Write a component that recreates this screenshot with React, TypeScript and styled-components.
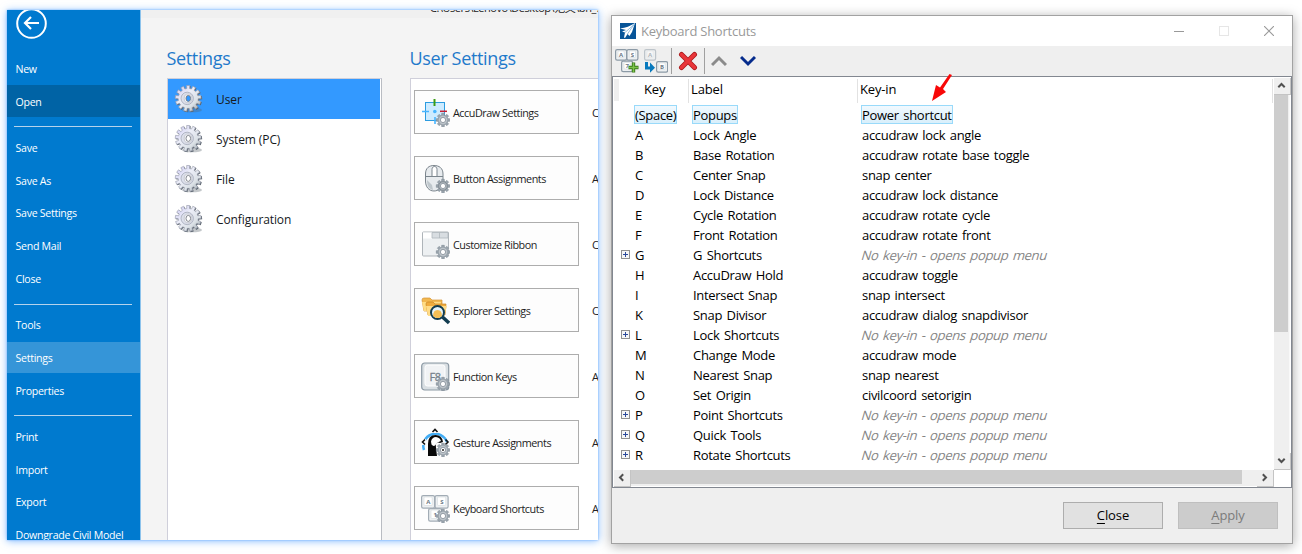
import React from "react";
import styled, { createGlobalStyle } from "styled-components";

const Global = createGlobalStyle`
  * { box-sizing: border-box; }
  html, body { margin: 0; background: #fff; overflow: hidden; }
  body { font-family: "Open Sans", "Noto Sans", "Noto Sans CJK SC", sans-serif; font-size: 12px; color: #222; }
  svg { display: block; flex: none; }
`;

const Page = styled.main`
  width: 1302px; height: 554px; padding: 10px 0 0 7px;
  display: flex; align-items: flex-start; gap: 13px; overflow: hidden; background: #fff;
`;

/* ---------- backstage window ---------- */
const Backstage = styled.section`
  width: 591px; height: 530px; display: flex; flex: none;
  box-shadow: 0 0 2px #6cb0ff, 0 1px 8px rgba(70, 150, 255, .65);
`;
const Sidebar = styled.nav`
  width: 134px; height: 530px; flex: none; overflow: hidden;
  background: #007acf; border-right: 1px solid #8dc3ec; color: #fff;
`;
const BackBox = styled.div`
  height: 42.6px; padding-left: 9px; overflow: hidden;
  svg { margin-top: -3px; }
`;
const NavItem = styled.div<{ $bg?: string }>`
  height: 31.9px; margin-bottom: 1px; padding: 1px 0 0 8.5px;
  display: flex; align-items: center; white-space: nowrap;
  font-size: 10.6px; letter-spacing: -.28px; color: #fff; background: ${p => p.$bg || "transparent"};
`;
const NavRule = styled.div`
  height: 12.9px; padding: 8px 8px 0 7px;
  &::before { content: ""; display: block; height: 1px; background: #b5d3ec; }
`;
const Content = styled.div`
  flex: 1; min-width: 0; height: 530px; overflow: hidden; background: #f4f4f4;
`;
const PathStrip = styled.div`
  height: 8px; padding-left: 289px; overflow: hidden; background: #f0f0f0;
  white-space: nowrap; color: #222;
  span { display: block; margin-top: -10px; line-height: 16px; font-size: 11px; letter-spacing: -.45px; }
`;
const Columns = styled.div`display: flex; height: 522px;`;
const Column = styled.div<{ $left: number; $width: number }>`
  flex: none; margin-left: ${p => p.$left}px; width: ${p => p.$width}px;
  display: flex; flex-direction: column;
`;
const Heading = styled.h2`
  margin: 0; height: 60px; padding-top: 27px; line-height: 26px; text-indent: -.6px;
  font-size: 18px; font-weight: 400; letter-spacing: -.33px; color: #1f7acb; white-space: nowrap;
`;
const CategoryList = styled.div`
  flex: 1; background: #fff; border: 1px solid #cfcfda; border-bottom: 0;
  border-right: 1px solid #b9bcc2; padding-right: 1px; margin-right: 1px;
`;
const Category = styled.div<{ $selected?: boolean }>`
  height: 40px; padding-left: 6px; display: flex; align-items: center; gap: 12px;
  font-size: 12px; letter-spacing: -.1px; color: #16191c; background: ${p => (p.$selected ? "#3399ff" : "#fff")};
`;
const ToolList = styled.div`
  flex: 1; background: #fff; border: 1px solid #cfcfda; border-width: 1px 0 0 1px;
  padding: 11px 0 0 3px; display: flex; flex-direction: column; gap: 22px; overflow: hidden;
`;
const ToolRow = styled.div`display: flex; align-items: center; gap: 13px; height: 44px; flex: none; font-size: 11px; color: #222;`;
const ToolButton = styled.button`
  width: 165px; height: 44px; flex: none; padding: 0 0 0 6px; display: flex; align-items: center; gap: 3px;
  border: 1px solid #adadad; background: #fdfdfd; font: inherit; font-size: 10.8px; letter-spacing: -.46px; color: #1c1c1c; white-space: nowrap;
`;

/* ---------- keyboard shortcuts dialog ---------- */
const Dialog = styled.section`
  width: 682px; height: 529px; flex: none; margin-top: 5px; display: flex; flex-direction: column;
  background: #efefef; border: 1px solid #a2a2a2; box-shadow: 0 2px 11px rgba(0, 0, 0, .34);
`;
const TitleBar = styled.header`
  height: 30px; flex: none; padding: 0 18px 0 8px; display: flex; align-items: center; background: #fff;
`;
const Title = styled.span`flex: 1; margin-left: 5px; font-size: 13px; letter-spacing: -.24px; color: #999;`;
const Caption = styled.div`display: flex; gap: 35px;`;
const Toolbar = styled.div`height: 30px; flex: none; display: flex; align-items: center; padding-left: 3px;`;
const Divider = styled.i`width: 1px; height: 26px; margin: 0 6px; background: #a0a0a0;`;
const Tool = styled.div<{ $w: number; $mr?: number }>`width: ${p => p.$w}px; margin-right: ${p => p.$mr || 0}px;`;
const Grid = styled.div`
  height: 412px; flex: none; border: 1px solid #828790; padding: 1px; background: #fff;
  display: grid; grid-template: 392px 17px / 660px 1fr;
`;
const Table = styled.div`overflow: hidden; font-size: 13px; color: #000;`;
const HeadRow = styled.div`height: 26px; display: flex; padding-top: 1px; line-height: 20px;`;
const HeadStub = styled.div`width: 5px; height: 22px; background: #efefef;`;
const HeadCell = styled.div<{ $w: number; $pad: number }>`
  width: ${p => p.$w}px; height: 24px; padding-left: ${p => p.$pad}px; border-right: 1px solid #e2e2e2; letter-spacing: -.15px;
`;
const Row = styled.div`height: 20px; display: flex; align-items: center; padding-left: 7px;`;
const Toggle = styled.div`width: 13px; height: 9px;`;
const Cell = styled.div<{ $w: number }>`width: ${p => p.$w}px; white-space: nowrap;`;
const CellText = styled.span<{ $active?: boolean; $muted?: boolean }>`
  display: inline-block; height: 19px; line-height: 18px; letter-spacing: -.3px; word-spacing: 1.4px;
  border: 1px solid ${p => (p.$active ? "#99dafa" : "transparent")};
  background: ${p => (p.$active ? "linear-gradient(#f1f9fe, #d9effb)" : "none")};
  color: ${p => (p.$muted ? "#858585" : "#000")};
  transform: ${p => (p.$muted ? "skewX(-16deg)" : "none")};
`;
const VScroll = styled.div`display: flex; flex-direction: column; width: 16px; background: #efefef; border-right: 1px solid #f8f8f8;`;
const HScroll = styled.div`display: flex; height: 16px; background: #efefef;`;
const ScrollButton = styled.div`
  width: 17px; height: 17px; flex: none; display: grid; place-items: center; padding: 0 2px 2px 0;
  border: 1px solid #c4c4c4; border-width: 0 1px 1px 0; background: #efefef;
`;
const VThumb = styled.div`width: 14px; height: 237px; background: #cdcdcd;`;
const HThumb = styled.div`width: 611px; height: 14px; background: #cdcdcd;`;
const Spacer = styled.div`flex: 1;`;
const Footer = styled.footer`flex: 1; display: flex; justify-content: flex-end; gap: 15px; padding: 14px 14px 0 0;`;
const DialogButton = styled.button`
  width: 100px; height: 27px; padding: 0 0 1px; border: 1px solid #adadad; background: #e1e1e1;
  font: inherit; font-size: 13px; letter-spacing: -.1px; color: #000;
  &:disabled { background: #ccc; border-color: #bfbfbf; color: #7b7b7b; }
  u { text-underline-offset: 3px; }
`;
const Pointer = styled.div`position: absolute; left: 930px; top: 72px;`;

/* ---------- drawings ---------- */
function gearPath(cx: number, cy: number, r: number, depth: number, teeth: number) {
  const pts: string[] = [];
  const step = (Math.PI * 2) / teeth;
  for (let i = 0; i < teeth; i++) {
    const a = i * step - Math.PI / 2;
    [[-0.3, r - depth], [-0.25, r], [0.25, r], [0.3, r - depth]].forEach(([o, q]) => {
      pts.push(`${(cx + Math.cos(a + o * step) * q).toFixed(2)} ${(cy + Math.sin(a + o * step) * q).toFixed(2)}`);
    });
  }
  return `M${pts.join("L")}Z`;
}
const BigGear = ({ hole }: { hole: string }) => (
  <svg width="30" height="30" viewBox="0 0 30 30">
    <defs>
      <linearGradient id="steel" x1="0" y1="0" x2="1" y2="1">
        <stop offset="0" stopColor="#c9c6f2" /><stop offset=".4" stopColor="#eceef8" /><stop offset=".7" stopColor="#dbe1e6" /><stop offset="1" stopColor="#8b969e" />
      </linearGradient>
    </defs>
    <ellipse cx="18" cy="26" rx="10" ry="2.3" fill="#56606a" opacity=".35" />
    <path d={gearPath(15, 15.2, 13.2, 3, 13)} fill="#59636e" strokeLinejoin="round" />
    <path d={gearPath(14.2, 14.4, 13, 3, 13)} fill="url(#steel)" stroke="#9599a8" strokeWidth=".6" strokeLinejoin="round" />
    <circle cx="13.2" cy="14.4" r="6.2" fill="#dcdfeb" stroke="#a5a9b8" strokeWidth=".8" />
    <ellipse cx="14" cy="14.4" rx="3.8" ry="4.4" fill="#f4f5f8" stroke="#b0b4bc" strokeWidth=".6" />
    <ellipse cx="14.3" cy="14.4" rx="2.3" ry="3" fill={hole} stroke="#777c84" strokeWidth=".9" />
  </svg>
);
const SmallGear = () => (
  <g>
    <path d={gearPath(22, 22, 6.8, 1.7, 8)} fill="#9ba5ae" stroke="#7e8993" strokeWidth=".6" />
    <circle cx="22" cy="22" r="4.2" fill="#bdc4ca" />
    <circle cx="22" cy="22" r="2.6" fill="#fff" stroke="#818c96" strokeWidth=".8" />
  </g>
);
const Key = ({ x, y, s, label, c = "#8c9aa6" }: { x: number; y: number; s: number; label: string; c?: string }) => (
  <g>
    <rect x={x + .6} y={y + .6} width={s} height={s - .5} rx="1.6" fill="#edf0f2" stroke={c} strokeWidth="1.2" />
    <rect x={x + 3} y={y + 2} width={s - 4.8} height={s - 4.5} rx="1" fill="#fff" stroke="#d3dade" strokeWidth=".6" />
    <text x={x + s / 2 + .6} y={y + s / 2 + 2.2} fontSize="6" fontWeight="700" textAnchor="middle" fill="#6c7985">{label}</text>
  </g>
);
const icons: Record<string, React.ReactNode> = {
  accudraw: <g fill="none">
    <rect x="4.5" y="4.5" width="19" height="18" fill="#cdebff" stroke="#2c9ce0" />
    <path d="M1 13.5h7M14 19v7" stroke="#48b5ff" strokeWidth="1.6" /><circle cx="13.8" cy="13.5" r="1.8" fill="#48b5ff" />
    <path d="M13.5 1v7" stroke="#3c9d14" strokeWidth="2" /><path d="M19 13.3h7" stroke="#c51f33" strokeWidth="1.5" />
    <SmallGear />
  </g>,
  mouse: <g fill="#e7ebee" stroke="#7b858d" strokeWidth="1">
    <path d="M4.5 10C4.500 4 8 1.500 13 1.500S22 4 22 10v7c0 6-4 10-9 10s-8.500-4-8.500-10z" />
    <path d="M4.500 12.500h17.500M11 12V5.500c0-4 5-4 5 0V12" fill="#fff" /><path d="M6 16c0 6 2 9 6 10l-1-5" fill="#bfc7cc" stroke="none" />
    <SmallGear />
  </g>,
  ribbon: <g>
    <rect x="1.500" y="2" width="26" height="24" rx="1" fill="#edf0f2" stroke="#aeb4b9" />
    <rect x="2" y="2.500" width="9" height="6" fill="#fff" /><path d="M11 2.500h16v5.500H11zM18.500 2.500V8" fill="#d8dde1" stroke="#b0b7bd" strokeWidth=".8" />
    <SmallGear />
  </g>,
  explorer: <g>
    <path d="M1 4q0-2 2-2h6l2 2h10v11H3z" fill="#f2b850" stroke="#d69335" strokeWidth=".7" />
    <path d="M1 6h19l-2 9H3z" fill="#ffdd86" />
    <path d="M5 8q0-2 2-2h5l2 2h11l-1 11H7z" fill="#f0ac3e" stroke="#c98524" strokeWidth=".7" />
    <path d="M5 10h21l-3 10H7z" fill="#ffdc88" />
    <circle cx="16.500" cy="16.500" r="6.500" fill="#e5f4fc" stroke="#123c50" strokeWidth="2" />
    <path d="M12 20q0-6 4.500-6t4.500 6l-3 2h-3z" fill="#f4bf55" />
    <path d="m21.500 21 6.500 6" stroke="#123c50" strokeWidth="3.400" />
  </g>,
  fkey: <g>
    <rect x=".7" y="1" width="27" height="27" rx="3" fill="#d9dfe3" stroke="#8c99a4" strokeWidth="1.200" />
    <rect x="4" y="3" width="20" height="21" rx="2.500" fill="#f1f3f5" stroke="#fff" />
    <text x="8.500" y="18.500" fontSize="11" fill="#75818c" stroke="#75818c" strokeWidth=".3">F8</text><SmallGear />
  </g>,
  gesture: <g>
    <path d="M3 22A12 12 0 1 1 26 14" fill="none" stroke="#42acf4" strokeWidth="2.500" />
    <path d="M10.500 0h7v5h-7zM0 11h5v6H0z" fill="#fdfdfd" />
    <path d="m11.500 4 2.500-2.500L16.500 4M4 11.500 1.500 14 4 16.500M24.500 11.500 27 14l-2.500 2.500" fill="none" stroke="#111" strokeWidth="1.600" />
    <path d="M7 28V16q0-9 7.500-9 6.500 0 7.500 7l-3 1q-5-2-4 5l1 8z" fill="#080808" />
    <path d="M10 13.500q1-4.500 5-4.500 4 .5 5 4l-3.500 1.500-2 2.500q-2 2-4-.5z" fill="#fdfdfd" />
    <SmallGear /><circle cx="22" cy="22" r="1" fill="#222" />
  </g>,
  keyboard: <g>
    <Key x={0} y={1} s={13} label="A" c="#a2acb5" /><Key x={13.500} y={1} s={13} label="S" c="#a2acb5" /><Key x={7} y={14} s={13} label="1" c="#a2acb5" /><SmallGear />
  </g>,
};
const Icon = ({ name }: { name: string }) => <svg width="29" height="29" viewBox="0 0 29 29">{icons[name]}</svg>;

const Expand = () => (
  <svg width="9" height="9" viewBox="0 0 9 9"><rect x=".5" y=".5" width="8" height="8" fill="#f6f6f6" stroke="#919191" /><path d="M2 4.500h5M4.500 2v5" stroke="#2c4a9c" /></svg>
);
const Chevron = ({ turn }: { turn: number }) => (
  <svg width="9" height="9" viewBox="0 0 9 9"><path d="M1.300 6.200 4.500 3l3.200 3.200" transform={`rotate(${turn} 4.500 4.500)`} fill="none" stroke="#505050" strokeWidth="2" /></svg>
);

type Nav = [string, string?] | null;
const nav: Nav[] = [["New"], ["Open", "#0063a5"], null, ["Save"], ["Save As"], ["Save Settings"], ["Send Mail"], ["Close"], null,
  ["Tools"], ["Settings", "#3595d8"], ["Properties"], null, ["Print"], ["Import"], ["Export"], ["Downgrade Civil Model"]];
const tools = [["accudraw", "AccuDraw Settings", "C"], ["mouse", "Button Assignments", "A"], ["ribbon", "Customize Ribbon", "C"],
  ["explorer", "Explorer Settings", "C"], ["fkey", "Function Keys", "A"], ["gesture", "Gesture Assignments", "A"], ["keyboard", "Keyboard Shortcuts", "A"]];
const rows: [string, string, string?][] = [
  ["(Space)", "Popups", "Power shortcut"], ["A", "Lock Angle", "accudraw lock angle"], ["B", "Base Rotation", "accudraw rotate base toggle"],
  ["C", "Center Snap", "snap center"], ["D", "Lock Distance", "accudraw lock distance"], ["E", "Cycle Rotation", "accudraw rotate cycle"],
  ["F", "Front Rotation", "accudraw rotate front"], ["G", "G Shortcuts"], ["H", "AccuDraw Hold", "accudraw toggle"],
  ["I", "Intersect Snap", "snap intersect"], ["K", "Snap Divisor", "accudraw dialog snapdivisor"], ["L", "Lock Shortcuts"],
  ["M", "Change Mode", "accudraw mode"], ["N", "Nearest Snap", "snap nearest"], ["O", "Set Origin", "civilcoord setorigin"],
  ["P", "Point Shortcuts"], ["Q", "Quick Tools"], ["R", "Rotate Shortcuts"]];

export default function App() {
  return (
    <Page>
      <Global />
      <Backstage>
        <Sidebar>
          <BackBox>
            <svg width="32" height="32" viewBox="0 0 32 32" fill="none" stroke="#fff"><circle cx="15.500" cy="16.500" r="14.300" strokeWidth="2" /><path d="M23 16H9m6-6-6 6 6 6" strokeWidth="2.200" /></svg>
          </BackBox>
          {nav.map((n, i) => n ? <NavItem key={i} $bg={n[1]}>{n[0]}</NavItem> : <NavRule key={i} />)}
        </Sidebar>
        <Content>
          <PathStrip><span>C:\Users\Lenovo\Desktop\范文\bn_7</span></PathStrip>
          <Columns>
            <Column $left={26} $width={216}>
              <Heading>Settings</Heading>
              <CategoryList>
                {["User", "System (PC)", "File", "Configuration"].map((c, i) => (
                  <Category key={c} $selected={i === 0}><BigGear hole={i ? "#fff" : "#3399ff"} />{c}</Category>
                ))}
              </CategoryList>
            </Column>
            <Column $left={27} $width={188}>
              <Heading>User Settings</Heading>
              <ToolList>
                {tools.map(([icon, label, text]) => (
                  <ToolRow key={icon}><ToolButton><Icon name={icon} />{label}</ToolButton>{text}</ToolRow>
                ))}
              </ToolList>
            </Column>
          </Columns>
        </Content>
      </Backstage>

      <Dialog>
        <TitleBar>
          <svg width="16" height="16" viewBox="0 0 16 16"><rect width="16" height="16" fill="#075498" /><path d="M0 5.500C6 5 10 3 15 0L12 9l-2.500 4-2-2L5 15l-1-.5 1-5-3-1 4-1.500z" fill="#fff" /><path d="M14 1.500 5 9.500M14 1.500 7.500 11" stroke="#6aa5d5" strokeWidth=".7" /></svg>
          <Title>Keyboard Shortcuts</Title>
          <Caption>
            <svg width="10" height="10" viewBox="0 0 10 10"><path d="M0 5.500h10" stroke="#999" /></svg>
            <svg width="10" height="10" viewBox="0 0 10 10"><rect x=".5" y=".5" width="9" height="9" fill="none" stroke="#e6e6e6" /></svg>
            <svg width="10" height="10" viewBox="0 0 10 10"><path d="m0 0 10 10M10 0 0 10" stroke="#999" strokeWidth="1.100" /></svg>
          </Caption>
        </TitleBar>
        <Toolbar>
          <Tool $w={24} $mr={5}>
            <svg width="24" height="24" viewBox="0 0 24 24"><Key x={0} y={0} s={11} label="A" /><Key x={11.300} y={0} s={11} label="S" /><Key x={6} y={11.500} s={11} label="7" /><path d="M18.500 13.500v10M13.500 18.500h10" stroke="#39791a" strokeWidth="3.400" /><path d="M18.500 14v9M14 18.500h9" stroke="#7cc24a" strokeWidth="1.500" /></svg>
          </Tool>
          <Tool $w={24} $mr={-3}>
            <svg width="24" height="24" viewBox="0 0 24 24"><g opacity=".5"><Key x={0} y={0} s={11} label="A" /></g><Key x={12} y={12} s={11} label="B" /><path d="M2.500 13v6H8" fill="none" stroke="#0879bd" strokeWidth="3" /><path d="m6 13.500 5 5.300-5 5z" fill="#0879bd" /></svg>
          </Tool>
          <Divider />
          <Tool $w={20}>
            <svg width="20" height="20" viewBox="0 0 20 20"><path d="m3.500 3.500 13 13M16.500 3.500l-13 13" stroke="#a9191b" strokeWidth="5" strokeLinecap="round" /><path d="m3.500 3.500 13 13M16.500 3.500l-13 13" stroke="#e9363a" strokeWidth="3.400" strokeLinecap="round" /></svg>
          </Tool>
          <Divider />
          <Tool $w={16} $mr={13}>
            <svg width="16" height="12" viewBox="0 0 16 12"><path d="m1 10 7-7 7 7" fill="none" stroke="#8b8b8b" strokeWidth="3" /></svg>
          </Tool>
          <Tool $w={16}>
            <svg width="16" height="12" viewBox="0 0 16 12"><path d="m1 2 7 7 7-7" fill="none" stroke="#052b8c" strokeWidth="3" /></svg>
          </Tool>
        </Toolbar>
        <Grid>
          <Table>
            <HeadRow>
              <HeadStub />
              <HeadCell $w={70} $pad={25}>Key</HeadCell>
              <HeadCell $w={169} $pad={2}>Label</HeadCell>
              <HeadCell $w={415} $pad={2}>Key-in</HeadCell>
            </HeadRow>
            {rows.map(([key, label, action], i) => (
              <Row key={key}>
                <Toggle>{!action && <Expand />}</Toggle>
                <Cell $w={58}><CellText $active={!i}>{key}</CellText></Cell>
                <Cell $w={169}><CellText $active={!i}>{label}</CellText></Cell>
                <Cell $w={300}><CellText $active={!i} $muted={!action}>{action || "No key-in - opens popup menu"}</CellText></Cell>
              </Row>
            ))}
          </Table>
          <VScroll>
            <ScrollButton><Chevron turn={0} /></ScrollButton><VThumb /><Spacer /><ScrollButton><Chevron turn={180} /></ScrollButton>
          </VScroll>
          <HScroll>
            <ScrollButton><Chevron turn={270} /></ScrollButton><HThumb /><Spacer /><ScrollButton><Chevron turn={90} /></ScrollButton>
          </HScroll>
        </Grid>
        <Footer>
          <DialogButton><u>C</u>lose</DialogButton>
          <DialogButton disabled><u>A</u>pply</DialogButton>
        </Footer>
      </Dialog>
      <Pointer>
        <svg width="24" height="30" viewBox="0 0 24 30"><path d="m19.500 2 2.500 1-9 14 3 3L2 29 6 13l4 2.500z" fill="#f80808" /></svg>
      </Pointer>
    </Page>
  );
}
